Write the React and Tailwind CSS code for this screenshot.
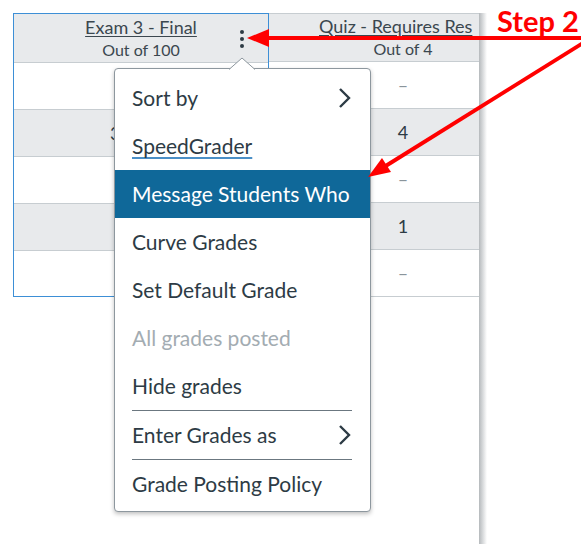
const menuItems = [
  { label: "Sort by", submenu: true },
  { label: "SpeedGrader", link: true },
  { label: "Message Students Who", active: true },
  { label: "Curve Grades" },
  { label: "Set Default Grade" },
  { label: "All grades posted", disabled: true },
  { label: "Hide grades", divider: true },
  { label: "Enter Grades as", submenu: true, divider: true },
  { label: "Grade Posting Policy" },
];

const quizScores = ["–", "4", "–", "1", "–"];

const Chevron = () => (
  <svg className="w-[16px] h-[22px]" viewBox="0 0 16 22" fill="none" stroke="#2d3b45" strokeWidth="2.4">
    <path d="M3 2l9 9-9 9" />
  </svg>
);

export default function App() {
  return (
    <div className="relative w-[581px] h-[544px] overflow-hidden bg-white font-['Lato','Liberation_Sans',sans-serif] text-[#2d3b45]">
      <div className="flex pl-[13px] pt-[13px]">
        {/* Exam column (selected) */}
        <div className="w-[256px] self-start border border-[#3d8fd6] box-border">
          <div className="h-[49px] bg-[#e8eaec] border-b border-[#c7cdd1] flex flex-col items-center justify-center relative">
            <span className="text-[18px] leading-[23px] underline underline-offset-2 text-[#3b474f]">Exam 3 - Final</span>
            <span className="text-[16px] leading-[22px] text-[#3b474f]">Out of 100</span>
            <div className="absolute left-[226px] top-[16px] flex flex-col gap-[3px]">
              <span className="w-[4px] h-[4px] rounded-full bg-[#2d3b45]" />
              <span className="w-[4px] h-[4px] rounded-full bg-[#2d3b45]" />
              <span className="w-[4px] h-[4px] rounded-full bg-[#2d3b45]" />
            </div>
          </div>
          <div className="h-[47px] border-b border-[#c7cdd1]" />
          <div className="h-[47px] border-b border-[#c7cdd1] bg-[#e8eaec] flex items-center pl-[96px] text-[18px]">35</div>
          <div className="h-[47px] border-b border-[#c7cdd1]" />
          <div className="h-[47px] border-b border-[#c7cdd1] bg-[#e8eaec]" />
          <div className="h-[45px]" />
        </div>

        {/* Quiz column, cut off by the frozen pane edge */}
        <div className="w-[210px] h-[531px] overflow-hidden border-t border-[#c7cdd1] box-border">
          <div className="w-[268px]">
            <div className="h-[48px] bg-[#e8eaec] border-b border-[#c7cdd1] flex flex-col justify-center">
              <span className="pl-[50px] whitespace-nowrap text-[18px] leading-[23px] underline underline-offset-2 text-[#3b474f]">Quiz - Requires Res</span>
              <span className="text-center text-[16px] leading-[22px] text-[#3b474f]">Out of 4</span>
            </div>
            {quizScores.map((score, i) => (
              <div
                key={i}
                className={`h-[47px] border-b border-[#c7cdd1] flex items-center justify-center text-[18px] ${i % 2 === 1 ? "bg-[#e8eaec]" : ""}`}
              >
                <span className={score === "–" ? "text-[#8a949b]" : ""}>{score}</span>
              </div>
            ))}
          </div>
        </div>
        <div className="w-[8px] h-[531px] bg-gradient-to-r from-[#b5b9bc] to-white" />
      </div>

      {/* Column options menu */}
      <div className="absolute left-[114px] top-[68px] w-[257px] bg-white border border-[#8d979e] rounded-[4px] shadow-[0_2px_4px_rgba(0,0,0,0.25)] pt-[5px] pb-[3px]">
        {menuItems.map((item) => (
          <div key={item.label} className="px-[17px]">
            <div
              className={`h-[48px] flex items-center justify-between text-[21px] -mx-[17px] px-[17px] ${
                item.active ? "bg-[#0f6899] text-white" : item.disabled ? "text-[#a3acb2]" : ""
              }`}
            >
              <span className={item.link ? "underline decoration-[#4b8fc6] underline-offset-[3px] decoration-[1.5px]" : ""}>
                {item.label}
              </span>
              {item.submenu && <Chevron />}
            </div>
            {item.divider && <div className="h-[1px] bg-[#6b7780] mr-[1px]" />}
          </div>
        ))}
      </div>

      {/* Menu caret */}
      <svg className="absolute left-[229px] top-[57px]" width="26" height="13" viewBox="0 0 26 13">
        <path d="M0 12.5 L13 1 L26 12.5" fill="white" stroke="#8d979e" strokeWidth="1" />
        <rect x="1" y="12" width="24" height="2" fill="white" />
      </svg>

      {/* Annotation arrows */}
      <svg className="absolute inset-0 pointer-events-none" width="581" height="544" viewBox="0 0 581 544">
        <line x1="581" y1="38" x2="262" y2="38" stroke="#ff0000" strokeWidth="4" />
        <polygon points="247,38 269,29 269,47" fill="#ff0000" />
        <line x1="583" y1="43" x2="384" y2="167" stroke="#ff0000" strokeWidth="4" />
        <polygon points="368,177 391,172 382,158" fill="#ff0000" />
      </svg>
      <div className="absolute left-[497px] top-[4px] text-[29px] leading-[34px] font-bold text-[#ff0000]">Step 2</div>
    </div>
  );
}
